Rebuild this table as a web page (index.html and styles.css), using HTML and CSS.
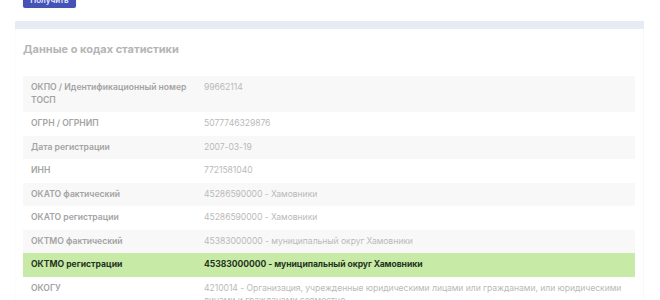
FILE: index.html
```html
<!DOCTYPE html>
<html lang="ru">
<head>
<meta charset="utf-8">
<link rel="stylesheet" href="styles.css">
</head>
<body>
<div class="top">
  <button class="btn">Получить</button>
</div>
<div class="band"></div>
<section class="card">
  <h2 class="title">Данные о кодах статистики</h2>
  <table class="stats">
    <tr class="odd"><th>ОКПО / Идентификационный номер ТОСП</th><td>99662114</td></tr>
    <tr><th>ОГРН / ОГРНИП</th><td>5077746329876</td></tr>
    <tr class="odd"><th>Дата регистрации</th><td>2007-03-19</td></tr>
    <tr><th>ИНН</th><td>7721581040</td></tr>
    <tr class="odd"><th>ОКАТО фактический</th><td>45286590000 - Хамовники</td></tr>
    <tr><th>ОКАТО регистрации</th><td>45286590000 - Хамовники</td></tr>
    <tr class="odd"><th>ОКТМО фактический</th><td>45383000000 - муниципальный округ Хамовники</td></tr>
    <tr class="hl"><th>ОКТМО регистрации</th><td>45383000000 - муниципальный округ Хамовники</td></tr>
    <tr><th>ОКОГУ</th><td>4210014 - Организация, учрежденные юридическими лицами или гражданами, или юридическими лицами и гражданами совместно</td></tr>
  </table>
</section>
</body>
</html>
```
FILE: styles.css
```css
html, body {
  margin: 0;
  padding: 0;
  background: #ffffff;
  font-family: Inter, "Liberation Sans", sans-serif;
  overflow: hidden;
}
.top {
  display: flow-root;
  height: 8px;
  padding-left: 23px;
}
.btn {
  display: block;
  margin-top: -9px;
  width: 53px;
  height: 17px;
  border: 0;
  border-radius: 2px;
  background: #4552b8;
  color: #e8eaf8;
  font-family: inherit;
  font-size: 8px;
  font-weight: 600;
  padding: 0;
  box-shadow: 0 0 3px rgba(230, 230, 150, 0.6);
}
.band {
  margin: 13px 16px 0 15px;
  height: 8px;
  background: #e7ebf3;
}
.card {
  margin: 0 16px 0 15px;
  padding: 13px 8px 0 7px;
  border-left: 1px solid #fbfbfb;
  border-right: 1px solid #f8f8f8;
}
.title {
  margin: 0 0 20px 0;
  font-size: 11px;
  line-height: 14px;
  font-weight: 700;
  color: #b5b5b5;
}
.stats {
  width: 100%;
  border-collapse: collapse;
  font-size: 8.6px;
  line-height: 12.5px;
}
.stats th {
  width: 165px;
  text-align: left;
  font-weight: 600;
  color: #a3a3a3;
  padding: 5px 8px 6px 8px;
  vertical-align: top;
}
.stats td {
  color: #bababa;
  padding: 5px 4px 6px 0;
  vertical-align: top;
  letter-spacing: -0.05px;
}
.stats tr.odd {
  background: #f8f8f8;
}
.stats tr.hl {
  background: #c7eba7;
}
.stats tr.hl th, .stats tr.hl td {
  color: #26331d;
  font-weight: 700;
}
```
